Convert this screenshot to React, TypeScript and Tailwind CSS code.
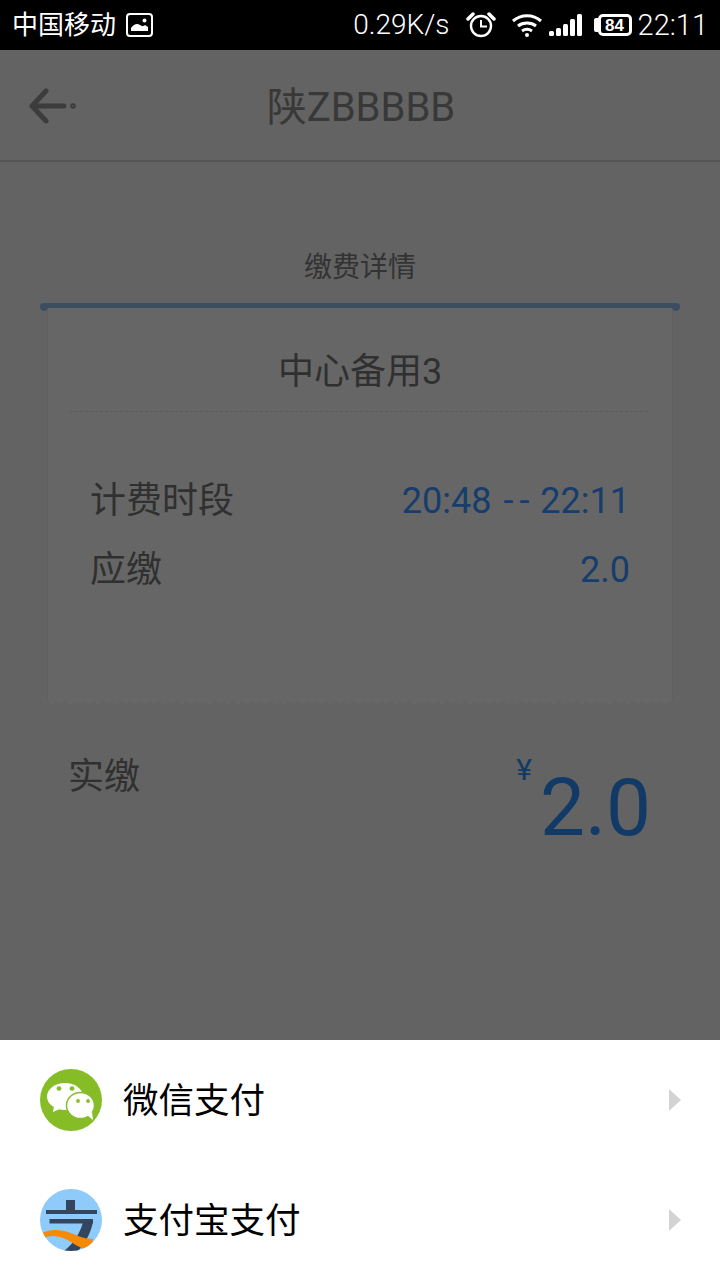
const FONT = "font-['Roboto','Noto_Sans_CJK_SC',sans-serif]"

function StatusBar() {
  return (
    <div className="h-[50px] bg-black text-white flex items-center justify-between pl-[12px] pr-[12px]">
      <div className="flex items-center gap-[10px]">
        <span className="text-[26px] leading-none">中国移动</span>
        <svg width="27" height="24" viewBox="0 0 27 24">
          <rect x="1" y="1" width="25" height="22" rx="3" fill="#000" stroke="#fff" strokeWidth="2" />
          <path d="M5 18v-3c3-4 6-5 9-3 2 1 3 2 5 0l3 2v4z" fill="#fff" />
          <circle cx="18.5" cy="7.5" r="2" fill="#fff" />
        </svg>
      </div>
      <div className="flex items-center">
        <span className="text-[28px] leading-none font-light mr-[16px]">0.29K/s</span>
        <svg width="30" height="26" viewBox="0 0 30 26" className="mr-[15px]" fill="none" stroke="#fff">
          <circle cx="15" cy="14" r="10" strokeWidth="2.4" />
          <path d="M15 8v6.5h6" strokeWidth="2" />
          <path d="M2 7l5-5M28 7l-5-5" strokeWidth="3.5" strokeLinecap="round" />
        </svg>
        <svg width="32" height="24" viewBox="0 0 32 24" className="mr-[6px]" fill="none" stroke="#fff" strokeWidth="3">
          <path d="M2 8c8-7 20-7 28 0M7 13c5-4 13-4 18 0M11 18c3-2 7-2 10 0" />
          <circle cx="16" cy="22" r="2" fill="#fff" stroke="none" />
        </svg>
        <svg width="34" height="24" viewBox="0 0 34 24" className="mr-[11px]" fill="#fff">
          <rect x="0" y="18" width="5" height="5" rx="1.5" />
          <rect x="7" y="15" width="5" height="8" rx="1.5" />
          <rect x="14" y="11" width="5" height="12" rx="1.5" />
          <rect x="21" y="6" width="5" height="17" rx="1.5" />
          <rect x="28" y="1" width="5" height="22" rx="1.5" />
        </svg>
        <div className="flex items-center mr-[6px]">
          <span className="w-[4px] h-[14px] bg-white rounded-l-[2px]" />
          <span className="w-[34px] h-[22px] border-[3px] border-white rounded-[5px] text-[17px] leading-none font-bold flex items-center justify-center font-['Liberation_Sans',sans-serif]">
            84
          </span>
        </div>
        <span className="text-[29px] leading-none font-light">22:11</span>
      </div>
    </div>
  )
}

function Header() {
  return (
    <div className="h-[112px] border-b-2 border-[#555555] flex items-center justify-center relative">
      <svg width="52" height="38" viewBox="0 0 52 38" className="absolute left-[26px] top-[38px]" fill="none" stroke="#3c3c3c" strokeWidth="5" strokeLinecap="round" strokeLinejoin="round">
        <path d="M20 3L6 18l14 15M6 18h32" />
        <circle cx="47" cy="18" r="1" strokeWidth="3.5" />
      </svg>
      <span className="text-[40px] leading-none text-[#383838] mt-[5px] ml-[2px]">陕ZBBBBB</span>
    </div>
  )
}

function ZigZag() {
  return (
    <svg width="625" height="5" className="block">
      <defs>
        <pattern id="zig" width="9.3" height="5" patternUnits="userSpaceOnUse">
          <path d="M0 0h9.3v.5L4.65 4.5 0 .5z" fill="#666666" />
        </pattern>
      </defs>
      <rect width="625" height="5" fill="url(#zig)" />
    </svg>
  )
}

function Receipt() {
  return (
    <div className="mx-[40px] mt-[21px] relative">
      {/* bar with the little round ends hanging below the paper edge */}
      <div className="h-[5px] bg-[#3c4d63] rounded-t-full relative z-10" />
      <span className="absolute left-0 top-0 w-[8px] h-[8px] rounded-full bg-[#3c4d63] z-10" />
      <span className="absolute right-0 top-0 w-[8px] h-[8px] rounded-full bg-[#3c4d63] z-10" />
      <div className="mx-[7px] mt-[-1px]">
        <div className="bg-[#666666] h-[393px] border-x border-[#5f5f5f] pl-[22px] pr-[24px] pt-[43px]">
          <div className="text-center text-[36px] leading-[44px] text-[#303030] pl-[2px] pb-[17px] border-b border-dashed border-[#5c5c5c]">
            中心备用3
          </div>
          <div className="flex justify-between items-center pl-[20px] pr-[18px] mt-[69px] h-[40px]">
            <span className="text-[36px] leading-none text-[#303030]">计费时段</span>
            <span className="text-[36px] leading-none text-[#163d6b]">
              20:48<span className="ml-[12px] mr-[5px] tracking-[6px]">--</span>22:11
            </span>
          </div>
          <div className="flex justify-between items-center pl-[20px] pr-[18px] mt-[29px] h-[40px]">
            <span className="text-[36px] leading-none text-[#303030]">应缴</span>
            <span className="text-[36px] leading-none text-[#163d6b]">2.0</span>
          </div>
        </div>
        <ZigZag />
      </div>
    </div>
  )
}

function PayRow({ icon, label }: { icon: React.ReactNode; label: string }) {
  return (
    <div className="h-[120px] flex items-center pl-[40px] pr-[39px]">
      {icon}
      <span className="ml-[21px] mt-[3px] text-[35.5px] leading-none text-black flex-1">{label}</span>
      <svg width="12" height="22" viewBox="0 0 12 22">
        <path d="M0 0l12 11L0 22z" fill="#d3d3d3" />
      </svg>
    </div>
  )
}

function WechatIcon() {
  return (
    <svg width="62" height="62" viewBox="0 0 62 62">
      <circle cx="31" cy="31" r="31" fill="#86bd26" />
      <ellipse cx="25" cy="27.5" rx="18" ry="13.5" fill="#fff" />
      <path d="M14 37l-1 6 9-4z" fill="#fff" />
      <ellipse cx="40.5" cy="36.5" rx="14" ry="13" fill="#fff" stroke="#86bd26" strokeWidth="1.5" />
      <path d="M47 46l6 5-1-8z" fill="#fff" />
      <ellipse cx="19" cy="19.5" rx="2.4" ry="2.2" fill="#86bd26" />
      <ellipse cx="32" cy="19.5" rx="2.4" ry="2.2" fill="#86bd26" />
      <circle cx="38" cy="32" r="1.9" fill="#86bd26" />
      <circle cx="48" cy="32" r="1.9" fill="#86bd26" />
    </svg>
  )
}

function AlipayIcon() {
  return (
    <svg width="62" height="62" viewBox="0 0 62 62">
      <clipPath id="alipay-clip">
        <circle cx="31" cy="31" r="31" />
      </clipPath>
      <g clipPath="url(#alipay-clip)">
        <rect width="62" height="62" fill="#8ecafa" />
        <rect x="26" y="11" width="9" height="12" fill="#34465e" />
        <rect x="6" y="21" width="51" height="4" fill="#34465e" />
        <rect x="9.5" y="30" width="43.5" height="4.5" fill="#34465e" />
        <path d="M43 33h10c-2 10-7 20-15 29H24c9-7 16-17 19-29z" fill="#34465e" />
        <path d="M2 44C12 39 24 40 38 47c5 2 10 3 15 3l-2 11c-7 0-14-4-20-8C22 47 12 45 3 49z" fill="#f58a07" />
      </g>
    </svg>
  )
}

export default function App() {
  return (
    <div className={`w-[720px] h-[1280px] overflow-hidden bg-[#636363] flex flex-col ${FONT}`}>
      <StatusBar />
      <Header />
      <div className="flex-1">
        <div className="text-center text-[28px] leading-none text-[#333333] mt-[92px]">缴费详情</div>
        <Receipt />
        <div className="flex justify-between pl-[68px] pr-[69px] mt-[38px] h-[110px]">
          <span className="text-[36px] leading-none text-[#303030] mt-[16px]">实缴</span>
          <div className="flex">
            <span className="text-[30px] leading-none text-[#113a66] mt-[12px]">¥</span>
            <span className="text-[80px] leading-none text-[#113a66] mt-[25px] ml-[8px]">2.0</span>
          </div>
        </div>
      </div>
      <div className="bg-white h-[240px] shrink-0">
        <PayRow icon={<WechatIcon />} label="微信支付" />
        <PayRow icon={<AlipayIcon />} label="支付宝支付" />
      </div>
    </div>
  )
}
